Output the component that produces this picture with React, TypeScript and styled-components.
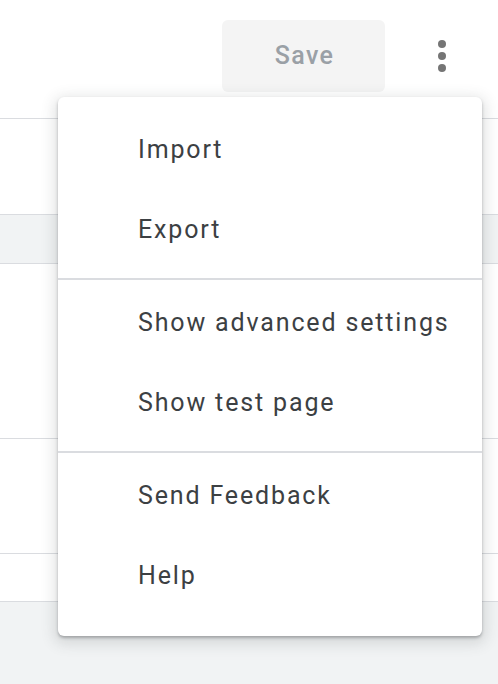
import React from "react";
import styled, { createGlobalStyle } from "styled-components";

const Global = createGlobalStyle`
  html, body { margin: 0; padding: 0; background: #ffffff; }
  body { font-family: Roboto, "Noto Sans", Arial, sans-serif; }
  * { box-sizing: border-box; }
`;

const Page = styled.div`
  position: relative;
  width: 498px;
  height: 684px;
  overflow: hidden;
  display: flex;
  flex-direction: column;
  background: #ffffff;
`;

const Header = styled.header`
  height: 119px;
  flex: none;
  display: flex;
  justify-content: flex-end;
  align-items: center;
  padding: 20px 32px 27px 0;
  gap: 33px;
  border-bottom: 1px solid #dadce0;
`;

const SaveButton = styled.button`
  width: 163px;
  height: 72px;
  border: none;
  border-radius: 6px;
  background: #f4f4f4;
  color: #9aa0a6;
  font-family: Roboto, Arial, sans-serif;
  font-size: 25px;
  font-weight: 500;
  letter-spacing: 1.3px;
  padding: 0 0 0 2px;
  cursor: default;
`;

const IconButton = styled.button`
  width: 48px;
  height: 48px;
  border: none;
  background: transparent;
  padding: 0;
  display: flex;
  align-items: center;
  justify-content: center;
`;

const Spacer = styled.div<{ $h: number }>`
  height: ${(p) => p.$h}px;
  flex: none;
`;

const Row = styled.div<{ $h: number; $shaded?: boolean }>`
  height: ${(p) => p.$h}px;
  flex: none;
  background: ${(p) => (p.$shaded ? "#f1f3f4" : "#ffffff")};
  border-bottom: 1px solid #dadce0;
`;

const BandRow = styled(Row)`
  border-top: 1px solid #dadce0;
`;

const Footer = styled.div`
  flex: 1;
  background: #f1f3f4;
`;

const Menu = styled.div`
  position: absolute;
  left: 58px;
  top: 97px;
  width: 424px;
  height: 539px;
  background: #ffffff;
  border-radius: 6px;
  padding: 12px 0 21px;
  display: flex;
  flex-direction: column;
  box-shadow: 0 2px 3px rgba(60, 64, 67, 0.35),
    0 4px 14px 4px rgba(60, 64, 67, 0.15);
`;

const Item = styled.div`
  height: 80px;
  flex: none;
  display: flex;
  align-items: center;
  padding-left: 80px;
  font-family: Roboto, Arial, sans-serif;
  font-size: 25px;
  color: #3c4043;
  letter-spacing: 1.85px;
`;

const Divider = styled.div`
  height: 2px;
  flex: none;
  background: #dadce0;
  margin: 9px 0 2px;
`;

const MoreIcon = () => (
  <svg width="48" height="48" viewBox="0 0 48 48" aria-hidden="true">
    <circle cx="24" cy="12" r="4" fill="#757575" />
    <circle cx="24" cy="24" r="4" fill="#757575" />
    <circle cx="24" cy="36" r="4" fill="#757575" />
  </svg>
);

export default function App() {
  return (
    <>
      <Global />
      <Page>
        <Header>
          <SaveButton>Save</SaveButton>
          <IconButton aria-label="More">
            <MoreIcon />
          </IconButton>
        </Header>
        <Spacer $h={95} />
        <BandRow $h={50} $shaded />
        <Row $h={175} />
        <Row $h={115} />
        <Row $h={48} />
        <Footer />
        <Menu>
          <Item>Import</Item>
          <Item>Export</Item>
          <Divider />
          <Item>Show advanced settings</Item>
          <Item>Show test page</Item>
          <Divider />
          <Item>Send Feedback</Item>
          <Item>Help</Item>
        </Menu>
      </Page>
    </>
  );
}
